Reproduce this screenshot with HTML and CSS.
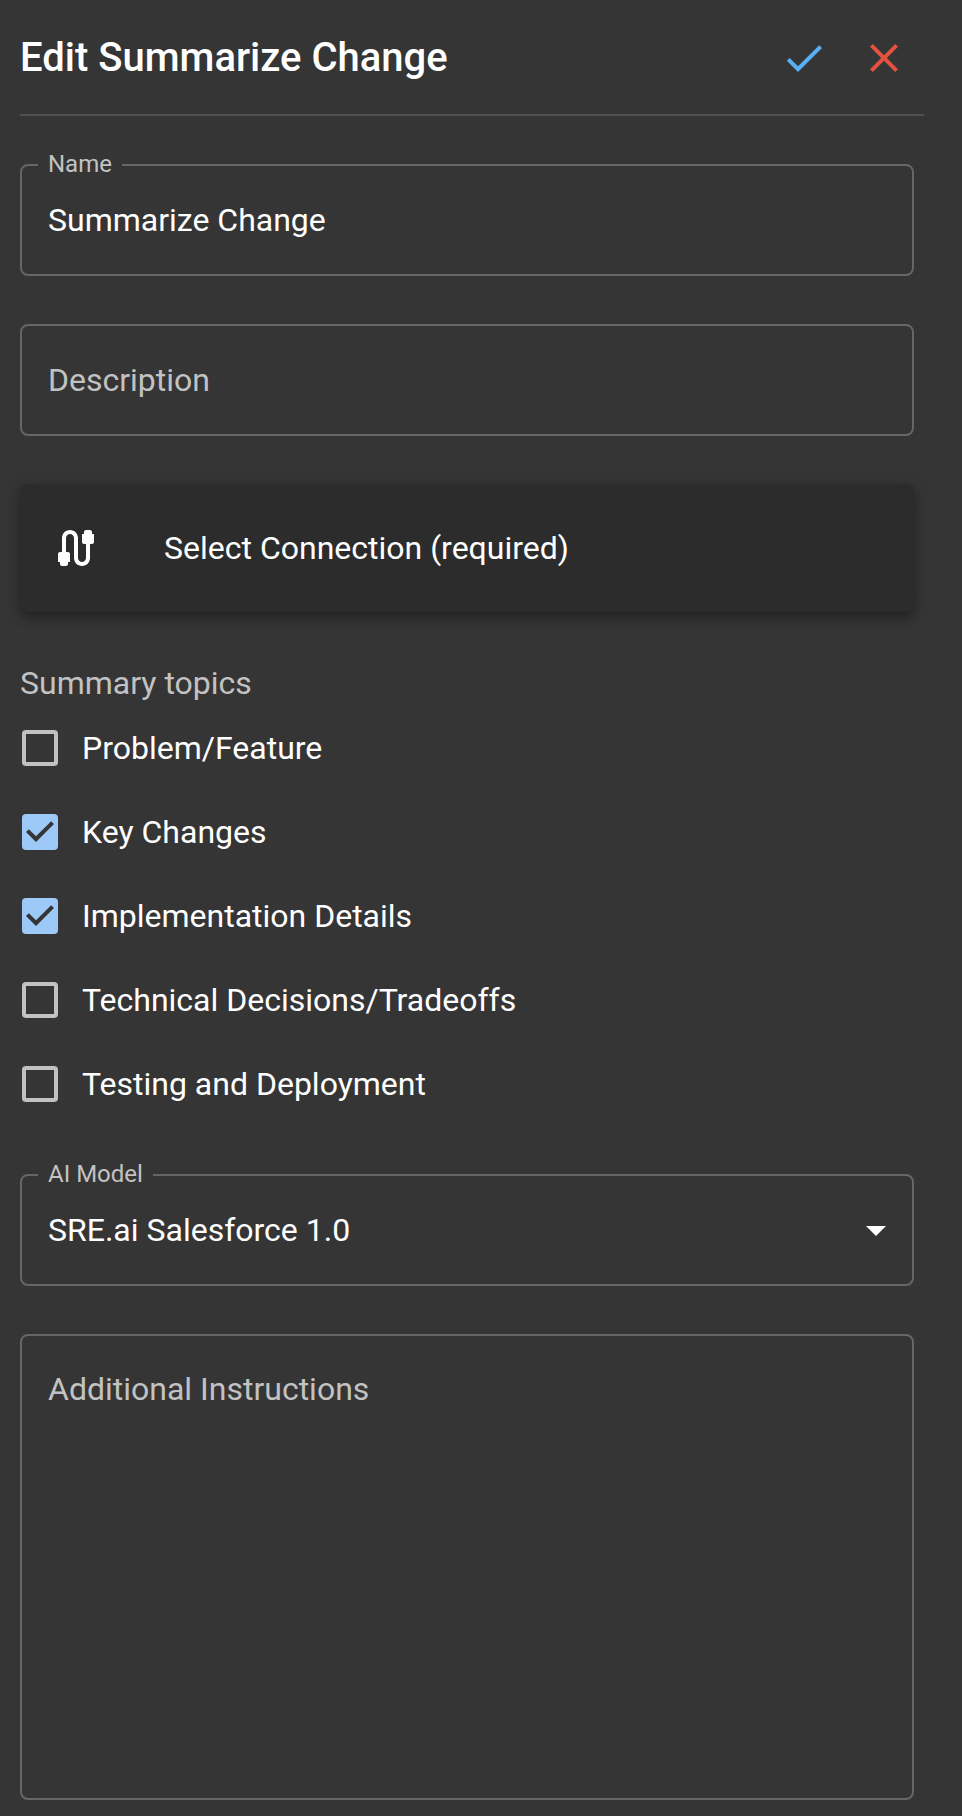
FILE: index.html
```html
<!DOCTYPE html>
<html lang="en">
<head>
<meta charset="utf-8">
<meta name="viewport" content="width=device-width, initial-scale=1">
<title>Edit Summarize Change</title>
<link rel="stylesheet" href="styles.css">
</head>
<body>
<form class="panel">
  <header class="panel-header">
    <h1 class="panel-title">Edit Summarize Change</h1>
    <div class="panel-actions">
      <button class="icon-button icon-button-save" type="button" aria-label="Save">
        <svg class="icon" viewBox="0 0 24 24" aria-hidden="true"><path d="M9 16.17 4.83 12l-1.42 1.41L9 19 21 7l-1.41-1.41z"/></svg>
      </button>
      <button class="icon-button icon-button-cancel" type="button" aria-label="Cancel">
        <svg class="icon" viewBox="0 0 24 24" aria-hidden="true"><path d="M19 6.41 17.59 5 12 10.59 6.41 5 5 6.41 10.59 12 5 17.59 6.41 19 12 13.41 17.59 19 19 17.59 13.41 12z"/></svg>
      </button>
    </div>
  </header>

  <div class="panel-body">
    <div class="field">
      <label class="field-label" for="name">Name</label>
      <input class="field-control" id="name" type="text" value="Summarize Change">
    </div>

    <div class="field">
      <input class="field-control" id="description" type="text" placeholder="Description" aria-label="Description">
    </div>

    <button class="connection" type="button">
      <svg class="icon" viewBox="0 0 24 24" aria-hidden="true"><path d="M20 5V4c0-.55-.45-1-1-1h-2c-.55 0-1 .45-1 1v1h-1v4c0 .55.45 1 1 1h1v7c0 1.1-.9 2-2 2s-2-.9-2-2V7c0-2.21-1.79-4-4-4S5 4.79 5 7v7H4c-.55 0-1 .45-1 1v4h1v1c0 .55.45 1 1 1h2c.55 0 1-.45 1-1v-1h1v-4c0-.55-.45-1-1-1H7V7c0-1.1.9-2 2-2s2 .9 2 2v10c0 2.21 1.79 4 4 4s4-1.79 4-4v-7h1c.55 0 1-.45 1-1V5h-1z"/></svg>
      <span>Select Connection (required)</span>
    </button>

    <fieldset class="topics">
      <legend class="topics-title">Summary topics</legend>
      <label class="topic"><input class="topic-box" type="checkbox">Problem/Feature</label>
      <label class="topic"><input class="topic-box" type="checkbox" checked>Key Changes</label>
      <label class="topic"><input class="topic-box" type="checkbox" checked>Implementation Details</label>
      <label class="topic"><input class="topic-box" type="checkbox">Technical Decisions/Tradeoffs</label>
      <label class="topic"><input class="topic-box" type="checkbox">Testing and Deployment</label>
    </fieldset>

    <div class="field">
      <label class="field-label" for="model">AI Model</label>
      <select class="field-control" id="model">
        <option>SRE.ai Salesforce 1.0</option>
      </select>
      <svg class="icon field-arrow" viewBox="0 0 24 24" aria-hidden="true"><path d="m7 10 5 5 5-5z"/></svg>
    </div>

    <div class="field field-grow">
      <textarea class="field-control field-area" id="instructions" placeholder="Additional Instructions" aria-label="Additional Instructions"></textarea>
    </div>
  </div>
</form>
</body>
</html>
```

FILE: styles.css
```css
:root {
  --surface: #353535;
  --card: #2c2c2c;
  --outline: #666;
  --divider: #505050;
  --text: #fff;
  --text-muted: #c2c2c2;
}

*,
*::before,
*::after {
  box-sizing: border-box;
}

body {
  margin: 0;
  background: var(--surface);
  color: var(--text);
  font-family: Roboto, "Liberation Sans", sans-serif;
  font-size: 32px;
  line-height: 46px;
}

button,
input,
select,
textarea {
  font: inherit;
  color: inherit;
}

.panel {
  display: flex;
  flex-direction: column;
  min-height: 100vh;
  padding: 18px 38px 16px 20px;
}

.panel-header {
  display: flex;
  align-items: center;
  justify-content: space-between;
  padding-bottom: 16px;
  border-bottom: 2px solid var(--divider);
}

.panel-title {
  margin: 0;
  font-size: 40px;
  font-weight: 500;
}

.panel-actions {
  display: flex;
}

.icon {
  display: block;
  flex: none;
  width: 48px;
  height: 48px;
  fill: currentColor;
}

.icon-button {
  padding: 16px;
  border: 0;
  background: none;
  cursor: pointer;
}

.icon-button-save {
  color: #58b0f5;
}

.icon-button-cancel {
  color: #e5513f;
}

.panel-body {
  display: flex;
  flex: 1;
  flex-direction: column;
  gap: 48px;
  padding: 48px 10px 0 0;
}

.field {
  position: relative;
  display: flex;
}

.field-grow {
  flex: 1;
}

.field-label {
  position: absolute;
  top: -14px;
  left: 18px;
  padding: 0 10px;
  background: var(--surface);
  color: var(--text-muted);
  font-size: 24px;
  line-height: 28px;
}

.field-control {
  flex: 1;
  width: 100%;
  height: 112px;
  margin: 0;
  padding: 0 26px;
  border: 2px solid var(--outline);
  border-radius: 8px;
  outline: 0;
  background: none;
  appearance: none;
}

.field-control::placeholder {
  color: var(--text-muted);
  opacity: 1;
}

.field-control option {
  background: var(--card);
}

.field-area {
  height: auto;
  min-height: 240px;
  padding: 30px 26px;
  resize: none;
}

.field-arrow {
  position: absolute;
  top: 32px;
  right: 14px;
  pointer-events: none;
}

.connection {
  display: flex;
  align-items: center;
  gap: 64px;
  padding: 40px 32px;
  border: 0;
  border-radius: 8px;
  background: var(--card);
  box-shadow:
    0 4px 8px -2px rgb(0 0 0 / 20%),
    0 8px 10px rgb(0 0 0 / 14%),
    0 2px 20px rgb(0 0 0 / 12%);
  text-align: left;
  cursor: pointer;
}

.topics {
  display: flex;
  flex-direction: column;
  min-width: 0;
  margin: 0;
  padding: 0;
  border: 0;
}

.topics-title {
  padding: 0;
  color: var(--text-muted);
}

.topic {
  display: flex;
  align-items: center;
  gap: 24px;
  min-height: 84px;
  padding-left: 2px;
}

.topic-box {
  flex: none;
  width: 36px;
  height: 36px;
  margin: 0;
  border: 4px solid var(--text-muted);
  border-radius: 4px;
  appearance: none;
}

.topic-box:checked {
  border: 0;
  background: #9cc9f7 url("data:image/svg+xml,%3Csvg xmlns='http://www.w3.org/2000/svg' viewBox='3 3 18 18'%3E%3Cpath fill='%23353535' d='m10 17-5-5 1.41-1.41L10 14.17l7.59-7.59L19 8z'/%3E%3C/svg%3E") center / 36px 36px no-repeat;
}
```
